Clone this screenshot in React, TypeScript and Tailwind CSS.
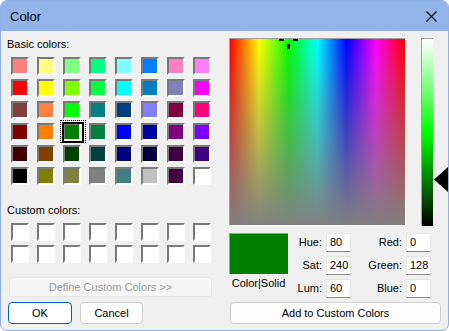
import React from "react";

const basic = [
  ["#FF8080", "#FFFF80", "#80FF80", "#00FF80", "#80FFFF", "#0080FF", "#FF80C0", "#FF80FF"],
  ["#FF0000", "#FFFF00", "#80FF00", "#00FF40", "#00FFFF", "#0080C0", "#8080C0", "#FF00FF"],
  ["#804040", "#FF8040", "#00FF00", "#008080", "#004080", "#8080FF", "#800040", "#FF0080"],
  ["#800000", "#FF8000", "#008000", "#008040", "#0000FF", "#0000A0", "#800080", "#8000FF"],
  ["#400000", "#804000", "#004000", "#004040", "#000080", "#000040", "#400040", "#400080"],
  ["#000000", "#808000", "#808040", "#808080", "#408080", "#C0C0C0", "#400040", "#FFFFFF"],
];

function Swatch({ color, selected }: { color: string; selected?: boolean }) {
  return (
    <div className="relative w-[18px] h-[18px]">
      <div
        className="w-full h-full border-2 border-t-[#7a7a7a] border-l-[#7a7a7a] border-b-[#ffffff] border-r-[#ffffff]"
        style={{ backgroundColor: color }}
      />
      {selected && (
        <>
          <div className="absolute left-[-1px] top-[-1px] w-[22px] h-[21px] border-2 border-black" />
          <div className="absolute left-[-3px] top-[-3px] w-[26px] h-[23px] border border-dotted border-black" />
        </>
      )}
    </div>
  );
}

function Field({ label, value, labelW }: { label: string; value: string; labelW: string }) {
  return (
    <div className="flex items-center h-[19px]">
      <div className={`${labelW} text-right pr-[4px]`}>{label}</div>
      <div className="w-[25px] h-[19px] bg-white border border-[#e5e5e5] border-b-[#8a8a8a] pl-[3px] leading-[17px]">
        {value}
      </div>
    </div>
  );
}

export default function App() {
  return (
    <div className="w-[449px] h-[331px] bg-white font-['Liberation_Sans',sans-serif] text-[11px] text-black">
      <div className="w-full h-full rounded-[7px] border border-[#8fb1e8] bg-[#f0f0f0] overflow-hidden flex flex-col">
        <div className="h-[30px] bg-[#93b4e8] flex items-center justify-between pl-[9px] pr-[10px] shrink-0">
          <span className="text-[13px] leading-none">Color</span>
          <svg width="11" height="11" viewBox="0 0 11 11" className="mr-[1px]">
            <path d="M0.5 0.5 L10.5 10.5 M10.5 0.5 L0.5 10.5" stroke="#000" strokeWidth="1.1" />
          </svg>
        </div>
        <div className="flex flex-1">
          {/* Left column */}
          <div className="w-[228px] pl-[10px] flex flex-col">
            <div className="pt-[6px] -ml-[4px] leading-[14px]">Basic colors:</div>
            <div className="mt-[6px] grid grid-cols-[repeat(8,18px)] gap-x-[8px] gap-y-[4px]">
              {basic.flatMap((row, r) =>
                row.map((c, i) => <Swatch key={`${r}-${i}`} color={c} selected={r === 3 && i === 2} />)
              )}
            </div>
            <div className="mt-[18px] -ml-[4px] leading-[14px]">Custom colors:</div>
            <div className="mt-[6px] grid grid-cols-[repeat(8,18px)] gap-x-[8px] gap-y-[4px]">
              {Array.from({ length: 16 }).map((_, i) => (
                <Swatch key={i} color="#FFFFFF" />
              ))}
            </div>
            <div className="mt-[14px] -ml-[2px] w-[203px] h-[20px] rounded-[3px] border border-[#e5e5e5] bg-[#f5f5f5] text-[#9d9d9d] flex items-center justify-center">
              Define Custom Colors &gt;&gt;
            </div>
            <div className="mt-[5px] -ml-[3px] flex gap-[8px]">
              <div className="w-[64px] h-[22px] rounded-[4px] border border-[#0067c0] bg-white flex items-center justify-center">
                OK
              </div>
              <div className="w-[63px] h-[22px] rounded-[4px] border border-[#d0d0d0] bg-[#fdfdfd] flex items-center justify-center">
                Cancel
              </div>
            </div>
          </div>
          {/* Right column */}
          <div className="flex-1 flex flex-col pt-[7px]">
            <div className="flex">
              <div className="relative w-[177px] h-[188px] border-t border-l border-t-[#a0a0a0] border-l-[#a0a0a0] border-b border-r border-b-white border-r-white bg-[linear-gradient(to_right,#ff0000,#ffff00,#00ff00,#00ffff,#0000ff,#ff00ff,#ff0000)]">
                <div className="absolute inset-0 bg-[linear-gradient(to_bottom,rgba(128,128,128,0),#808080)]" />
                <div className="absolute left-[49px] top-[0px] w-[5px] h-[2px] bg-black" />
                <div className="absolute left-[63px] top-[0px] w-[5px] h-[2px] bg-black" />
                <div className="absolute left-[57px] top-[5px] w-[3px] h-[5px] bg-black" />
              </div>
              <div className="relative ml-[15px] w-[12px] h-[188px] border-t border-l border-t-[#a0a0a0] border-l-[#a0a0a0] bg-[linear-gradient(to_bottom,#ffffff,#00ff00_50%,#000000)]">
                <svg width="15" height="27" viewBox="0 0 15 27" className="absolute left-[12px] top-[127px]">
                  <polygon points="0,13.5 15,0 15,27" fill="#000" />
                </svg>
              </div>
            </div>
            <div className="flex mt-[7px]">
              <div className="flex flex-col items-center w-[59px]">
                <div className="w-[59px] h-[41px] bg-[#008000] border-t border-l border-[#9a9a9a]" />
                <div className="mt-[2px] leading-[14px]">Color|Solid</div>
              </div>
              <div className="flex flex-col gap-[4px]">
                <Field label="Hue:" value="80" labelW="w-[38px]" />
                <Field label="Sat:" value="240" labelW="w-[38px]" />
                <Field label="Lum:" value="60" labelW="w-[38px]" />
              </div>
              <div className="flex flex-col gap-[4px]">
                <Field label="Red:" value="0" labelW="w-[55px]" />
                <Field label="Green:" value="128" labelW="w-[55px]" />
                <Field label="Blue:" value="0" labelW="w-[55px]" />
              </div>
            </div>
            <div className="mt-[4px] ml-[1px] w-[211px] h-[22px] rounded-[4px] border border-[#d0d0d0] bg-[#fdfdfd] flex items-center justify-center">
              Add to Custom Colors
            </div>
          </div>
        </div>
      </div>
    </div>
  );
}
